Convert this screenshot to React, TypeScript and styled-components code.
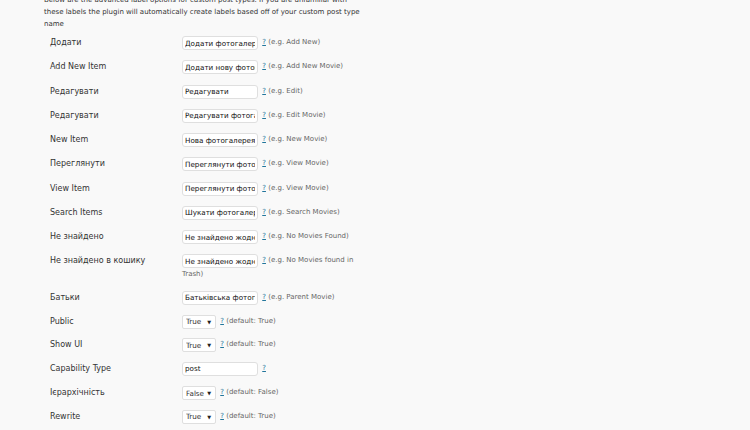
import React from 'react';
import styled, { createGlobalStyle } from 'styled-components';

const GlobalStyle = createGlobalStyle`
  html, body {
    margin: 0;
    padding: 0;
    background: #f9f9f9;
  }
  body {
    font-family: 'DejaVu Sans', Verdana, sans-serif;
    color: #333;
    overflow: hidden;
  }
`;

const Page = styled.div`
  width: 750px;
  height: 430px;
  overflow: hidden;
  padding-left: 44px;
  box-sizing: border-box;
`;

const Intro = styled.p`
  margin: -6px 0 1px;
  font-size: 7px;
  line-height: 12px;
  color: #333;
`;

const Table = styled.div`
  display: flex;
  flex-direction: column;
`;

const Row = styled.div<{ compact?: boolean }>`
  display: flex;
  align-items: flex-start;
  padding: 5px 0 ${(p) => (p.compact ? '4.5px' : '5.25px')};
`;

const Label = styled.div`
  width: 138px;
  flex: none;
  padding-left: 6px;
  box-sizing: border-box;
  font-size: 8px;
  line-height: 14px;
  color: #333;
`;

const Field = styled.div`
  width: 176px;
  flex: none;
  font-size: 7px;
  line-height: 12px;
  color: #666;
`;

const TextInput = styled.input`
  display: inline-block;
  vertical-align: top;
  width: 76px;
  height: 14px;
  box-sizing: border-box;
  margin: 0;
  padding: 0 2px;
  border: 1px solid #dfdfdf;
  border-radius: 3px;
  background: #fff;
  font-family: 'DejaVu Sans', Verdana, sans-serif;
  font-size: 7.2px;
  color: #111;
  outline: none;
`;

const SelectWrap = styled.span`
  position: relative;
  display: inline-block;
  vertical-align: top;
  width: 34px;
  height: 14px;
`;

const Select = styled.select`
  appearance: none;
  -webkit-appearance: none;
  width: 100%;
  height: 100%;
  box-sizing: border-box;
  margin: 0;
  padding: 0 0 0 3px;
  border: 1px solid #dfdfdf;
  border-radius: 2px;
  background: #fff;
  font-family: 'DejaVu Sans', Verdana, sans-serif;
  font-size: 7.2px;
  color: #333;
  outline: none;
`;

const Arrow = styled.span`
  position: absolute;
  right: 5px;
  top: 0;
  line-height: 14px;
  font-size: 5px;
  color: #222;
  pointer-events: none;
`;

const Help = styled.a`
  margin-left: 2px;
  color: #21759b;
  text-decoration: underline;
  font-size: 7px;
`;

type Item =
  | { label: string; kind: 'text'; value: string; hint?: string }
  | { label: string; kind: 'select'; value: string; hint: string };

const items: Item[] = [
  { label: 'Додати', kind: 'text', value: 'Додати фотогалерею', hint: '(e.g. Add New)' },
  { label: 'Add New Item', kind: 'text', value: 'Додати нову фотогалерею', hint: '(e.g. Add New Movie)' },
  { label: 'Редагувати', kind: 'text', value: 'Редагувати', hint: '(e.g. Edit)' },
  { label: 'Редагувати', kind: 'text', value: 'Редагувати фотогалерею', hint: '(e.g. Edit Movie)' },
  { label: 'New Item', kind: 'text', value: 'Нова фотогалерея', hint: '(e.g. New Movie)' },
  { label: 'Переглянути', kind: 'text', value: 'Переглянути фотогалерею', hint: '(e.g. View Movie)' },
  { label: 'View Item', kind: 'text', value: 'Переглянути фотогалерею', hint: '(e.g. View Movie)' },
  { label: 'Search Items', kind: 'text', value: 'Шукати фотогалереї', hint: '(e.g. Search Movies)' },
  { label: 'Не знайдено', kind: 'text', value: 'Не знайдено жодної фотогалереї', hint: '(e.g. No Movies Found)' },
  { label: 'Не знайдено в кошику', kind: 'text', value: 'Не знайдено жодної фотогалереї', hint: '(e.g. No Movies found in Trash)' },
  { label: 'Батьки', kind: 'text', value: 'Батьківська фотогалерея', hint: '(e.g. Parent Movie)' },
  { label: 'Public', kind: 'select', value: 'True', hint: '(default: True)' },
  { label: 'Show UI', kind: 'select', value: 'True', hint: '(default: True)' },
  { label: 'Capability Type', kind: 'text', value: 'post' },
  { label: 'Ієрархічність', kind: 'select', value: 'False', hint: '(default: False)' },
  { label: 'Rewrite', kind: 'select', value: 'True', hint: '(default: True)' },
];

export default function App() {
  return (
    <>
      <GlobalStyle />
      <Page>
        <Intro>
          Below are the advanced label options for custom post types. If you are unfamiliar with
          <br />
          these labels the plugin will automatically create labels based off of your custom post type
          <br />
          name
        </Intro>
        <Table>
          {items.map((item, i) => (
            <Row key={i} compact={item.kind === 'select'}>
              <Label>{item.label}</Label>
              <Field>
                {item.kind === 'text' ? (
                  <TextInput type="text" defaultValue={item.value} />
                ) : (
                  <SelectWrap>
                    <Select defaultValue={item.value}>
                      <option value="True">True</option>
                      <option value="False">False</option>
                    </Select>
                    <Arrow>▼</Arrow>
                  </SelectWrap>
                )}{' '}
                <Help href="#">?</Help>
                {item.hint ? ` ${item.hint}` : null}
              </Field>
            </Row>
          ))}
        </Table>
      </Page>
    </>
  );
}
